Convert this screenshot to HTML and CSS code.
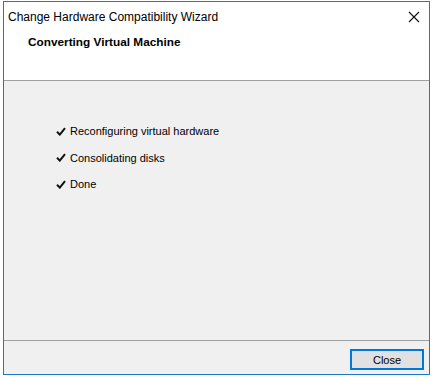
FILE: index.html
```html
<!DOCTYPE html>
<html lang="en">

<head>
  <meta charset="UTF-8">
  <title>Change Hardware Compatibility Wizard</title>
  <link rel="stylesheet" href="styles.css">
</head>

<body>

  <div class="window">
    <!-- Header: title bar + page heading -->
    <div class="header">
      <div class="titlebar">
        <span class="title">Change Hardware Compatibility Wizard</span>
        <svg class="close-x" width="12" height="12" viewBox="0 0 12 12">
          <path d="M1 1 L11 11 M11 1 L1 11" stroke="#111" stroke-width="1.1" fill="none" />
        </svg>
      </div>
      <h1 class="heading">Converting Virtual Machine</h1>
    </div>

    <!-- Progress steps -->
    <div class="content">
      <ul class="steps">
        <li><svg class="check" width="10" height="9" viewBox="0 0 10 9"><path d="M1 4.8 L3.8 7.6 L9 1.2" stroke="#111" stroke-width="2" fill="none" /></svg>Reconfiguring virtual hardware</li>
        <li><svg class="check" width="10" height="9" viewBox="0 0 10 9"><path d="M1 4.8 L3.8 7.6 L9 1.2" stroke="#111" stroke-width="2" fill="none" /></svg>Consolidating disks</li>
        <li><svg class="check" width="10" height="9" viewBox="0 0 10 9"><path d="M1 4.8 L3.8 7.6 L9 1.2" stroke="#111" stroke-width="2" fill="none" /></svg>Done</li>
      </ul>
    </div>

    <div class="footer">
      <button type="button">Close</button>
    </div>
  </div>

</body>

</html>
```

FILE: styles.css
```css
body {
  font-family: "Liberation Sans", Arial, sans-serif;
  background-color: #fff;
  margin: 0;
  padding: 1px 0 0 3px;
}

.window {
  width: 425px;
  height: 372px;
  border: 1px solid #1c79c9;
  display: flex;
  flex-direction: column;
  background-color: #f0f0f0;
}

.header {
  height: 78px;
  background-color: #fff;
  border-bottom: 1px solid #a0a0a0;
}

.titlebar {
  height: 29px;
  display: flex;
  align-items: center;
  justify-content: space-between;
  padding: 0 9px 0 4px;
}

.title {
  font-size: 12px;
  color: #000;
}

.heading {
  margin: 4px 0 0 24px;
  font-size: 11.8px;
  font-weight: bold;
  color: #000;
}

.content {
  flex: 1;
}

.steps {
  list-style: none;
  margin: 37px 0 0 52px;
  padding: 0;
  font-size: 11px;
  color: #000;
}

.steps li {
  display: flex;
  align-items: center;
  height: 26.5px;
}

.check {
  margin-right: 4px;
}

.footer {
  height: 34px;
  border-top: 1px solid #a0a0a0;
  display: flex;
  justify-content: flex-end;
  align-items: flex-start;
  padding: 8px 5px 0 0;
  box-sizing: border-box;
}

button {
  width: 74px;
  height: 21px;
  padding: 0;
  background-color: #e1e1e1;
  border: 2px solid #0078d7;
  font-family: "Liberation Sans", Arial, sans-serif;
  font-size: 11px;
  color: #000;
}
```
